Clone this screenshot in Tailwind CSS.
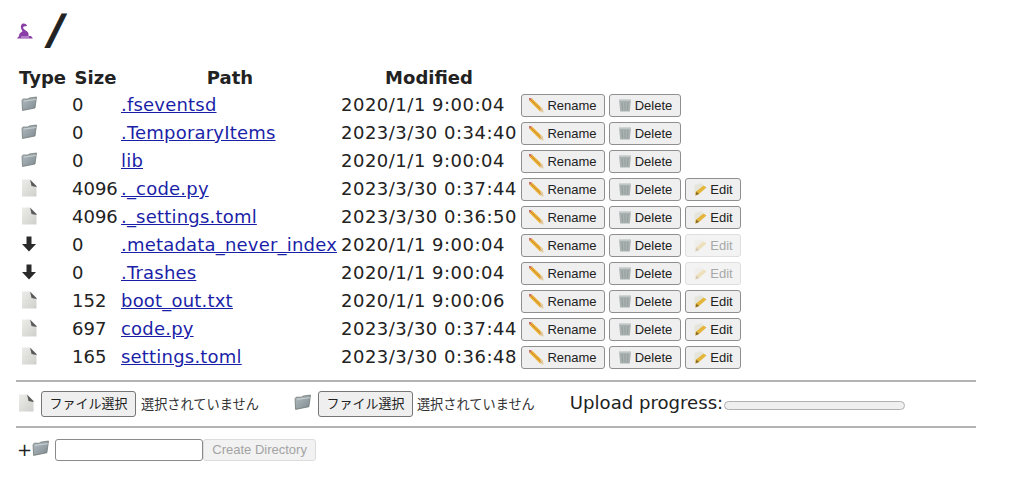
<!DOCTYPE html>
<html lang="ja">
<head>
  <meta charset="UTF-8" />
  <title>/</title>
  <script src="https://cdn.jsdelivr.net/npm/@tailwindcss/browser@4"></script>
</head>
<body class="bg-white text-[#222] font-['DejaVu_Sans',sans-serif] text-[18px] w-[1010px] h-[490px] overflow-hidden">
  <svg class="absolute w-0 h-0">
    <defs>
      <linearGradient id="fg" x1="0" y1="0" x2="1" y2="1"><stop offset="0" stop-color="#b4bec4"/><stop offset="1" stop-color="#7d898e"/></linearGradient>
      <linearGradient id="dg" x1="0" y1="0" x2="1" y2="1"><stop offset="0" stop-color="#ecece8"/><stop offset="1" stop-color="#cfcfcc"/></linearGradient>
      <symbol id="folder" viewBox="0 0 16 16"><path d="M1 4.5 L2 3 L7 3 L8 2 L15.5 1 L14 12 L1.5 14.5 Z" fill="url(#fg)" stroke="#69736f" stroke-width="0.7"/><path d="M3 5 L15 3.5" stroke="#d5dadc" stroke-width="0.8"/></symbol>
      <symbol id="doc" viewBox="0 0 16 18"><path d="M1 0.5 H9 L10 6 L15.5 7 V17.5 H1 Z" fill="url(#dg)"/><path d="M9 0.5 L15.5 7 V8 L10.5 7 Z" fill="#5a5a5a"/></symbol>
      <symbol id="down" viewBox="0 0 16 16"><path d="M5.5 0.5 H10.5 V8 H15 L8 15.5 L1 8 H5.5 Z" fill="#2a2a2a"/></symbol>
      <symbol id="pencil" viewBox="0 0 15 15"><path d="M3 0.5 L14 11 L11 13.5 L0.5 3 Z" fill="#eeb23a"/><path d="M3 0.5 L0.5 3 L0 0 Z" fill="#c0504d"/><path d="M11.5 8.8 L14 11 L14.8 14.8 L11 13.5 Z" fill="#e4cfa8"/><path d="M1.8 1.8 L12.5 12.2" stroke="#b97f22" stroke-width="0.8"/></symbol>
      <symbol id="trash" viewBox="0 0 14 14"><path d="M1 1 H13 L11.8 13.5 H2.2 Z" fill="#a9b1b1"/><path d="M1 1 H13 V2.6 H1 Z" fill="#cfd4d4"/><path d="M4 4 L4.6 12.5 M7 4 V12.5 M10 4 L9.4 12.5" stroke="#8c9595" stroke-width="0.7"/></symbol>
      <symbol id="edit" viewBox="0 0 14 14"><path d="M1.5 3 L9 1 L11.5 6 L4 12.5 H1.5 Z" fill="#e6e5dc"/><path d="M2.5 10 L10.5 3.5 L13.5 5.5 L6 12 L2.5 13.5 Z" fill="#e4b63c"/><path d="M2.5 13.5 L6 12 L3.5 9.5 Z" fill="#8a6b2a"/></symbol>
    </defs>
  </svg>

  <div class="pl-4 w-[976px]">
    <h1 class="flex items-center h-[60px]">
      <svg class="w-[18px] h-[17px] mt-[3px]" viewBox="0 0 18 17">
        <path d="M6 1 C8 0 11 1 11 3 L8 3.5 C6.5 4 7 6 9 7 C12 8.5 13 10 12.5 13 H15 L17 15.5 H1 L3 13 C3 10 6 9 6.5 8 C5 6 4 3 6 1 Z" fill="#8a3fa8"/>
        <path d="M5 14 H13" stroke="#d9b8e6" stroke-width="1"/>
      </svg>
      <span class="ml-[15px] text-[40px] leading-none font-bold italic [-webkit-text-stroke:1px_#222]">/</span>
    </h1>

    <table class="border-separate border-spacing-[2px] ml-[1px] mt-[6px]">
      <thead>
        <tr class="font-bold h-[22px] leading-[20px] align-top">
          <th class="p-0 w-[51px] text-left">Type</th>
          <th class="p-0 w-[47px] text-center">Size</th>
          <th class="p-0 w-[218px] text-center">Path</th>
          <th class="p-0 w-[176px] text-center">Modified</th>
          <th class="p-0"></th>
        </tr>
      </thead>
      <tbody id="rows"></tbody>
    </table>

    <hr class="mt-[8px] border-0 h-[2px] bg-[#b4b4b4]" />

    <div class="flex items-center h-[44px]">
      <svg class="w-[16px] h-[18px] ml-[2px] mb-[3px]"><use href="#doc"/></svg>
      <button class="ml-[7px] h-[26px] w-[95px] border border-[#767676] rounded-[3px] bg-[#efefef] text-[13px] font-['Liberation_Sans','Noto_Sans_CJK_JP',sans-serif]">ファイル選択</button>
      <span class="ml-[5px] text-[13.2px] text-[#333] font-['Noto_Sans_CJK_JP',sans-serif]">選択されていません</span>
      <svg class="w-[17px] h-[17px] ml-[35px] mb-[3px]"><use href="#folder"/></svg>
      <button class="ml-[7px] h-[26px] w-[95px] border border-[#767676] rounded-[3px] bg-[#efefef] text-[13px] font-['Liberation_Sans','Noto_Sans_CJK_JP',sans-serif]">ファイル選択</button>
      <span class="ml-[4px] text-[13.2px] text-[#333] font-['Noto_Sans_CJK_JP',sans-serif]">選択されていません</span>
      <span class="ml-[35px] mb-[2px] text-[18.1px] whitespace-nowrap">Upload progress:</span>
      <div class="ml-[1px] mt-[2px] w-[181px] h-[9px] rounded-full border border-[#b0b0b0] bg-[#efefef]"></div>
    </div>

    <hr class="border-0 h-[2px] bg-[#b4b4b4]" />

    <div class="flex items-center h-[44px]">
      <span class="ml-[1px] text-[18px] leading-none">+</span>
      <svg class="w-[17px] h-[17px] mb-[4px]"><use href="#folder"/></svg>
      <input type="text" class="ml-[6px] h-[22px] w-[148px] border border-[#8a8a8a] rounded-[3px] bg-white" />
      <button disabled class="h-[22px] w-[113px] border border-[#dcdcdc] rounded-[3px] bg-[#f2f2f2] text-[13px] text-[#a3a3a3] font-['Liberation_Sans',sans-serif]">Create Directory</button>
    </div>
  </div>

  <script>
    const files = [
      ["folder", "0", ".fseventsd", "2020/1/1 9:00:04", ""],
      ["folder", "0", ".TemporaryItems", "2023/3/30 0:34:40", ""],
      ["folder", "0", "lib", "2020/1/1 9:00:04", ""],
      ["doc", "4096", "._code.py", "2023/3/30 0:37:44", "on"],
      ["doc", "4096", "._settings.toml", "2023/3/30 0:36:50", "on"],
      ["down", "0", ".metadata_never_index", "2020/1/1 9:00:04", "off"],
      ["down", "0", ".Trashes", "2020/1/1 9:00:04", "off"],
      ["doc", "152", "boot_out.txt", "2020/1/1 9:00:06", "on"],
      ["doc", "697", "code.py", "2023/3/30 0:37:44", "on"],
      ["doc", "165", "settings.toml", "2023/3/30 0:36:48", "on"],
    ];
    const btn = "inline-flex items-center justify-center gap-[3px] h-[23px] border border-[#8f8f8f] rounded-[3px] bg-[#efefef] text-[13px] leading-none text-[#222] font-['Liberation_Sans',sans-serif]";
    const btnOff = "inline-flex items-center justify-center gap-[3px] h-[23px] border border-[#dedede] rounded-[3px] bg-[#f3f3f3] text-[13px] leading-none text-[#a8a8a8] font-['Liberation_Sans',sans-serif]";

    document.getElementById("rows").innerHTML = files.map(f => {
      let edit = "";
      if (f[4] == "on") edit = `<button class="${btn} w-[56px]"><svg class="w-[14px] h-[14px]"><use href="#edit"/></svg>Edit</button>`;
      if (f[4] == "off") edit = `<button disabled class="${btnOff} w-[56px]"><svg class="w-[14px] h-[14px] opacity-30"><use href="#edit"/></svg>Edit</button>`;
      const iconSize = f[0] == "doc" ? "w-[16px] h-[18px]" : "w-[16px] h-[16px]";
      return `<tr class="h-[26px] leading-[26px]">
        <td class="p-0"><svg class="${iconSize} ml-[2px] mb-[2px]"><use href="#${f[0]}"/></svg></td>
        <td class="p-0 whitespace-nowrap">${f[1]}</td>
        <td class="p-0 whitespace-nowrap tracking-[0.2px]"><a href="#" class="text-[#1b1fa8] underline">${f[2]}</a></td>
        <td class="p-0 whitespace-nowrap tracking-[0.5px]">${f[3]}</td>
        <td class="p-0 whitespace-nowrap">
          <div class="flex gap-[4px] ml-[2px]">
            <button class="${btn} w-[84px]"><svg class="w-[15px] h-[15px]"><use href="#pencil"/></svg>Rename</button>
            <button class="${btn} w-[72px]"><svg class="w-[14px] h-[14px]"><use href="#trash"/></svg>Delete</button>${edit}
          </div>
        </td>
      </tr>`;
    }).join("");
  </script>
</body>
</html>
